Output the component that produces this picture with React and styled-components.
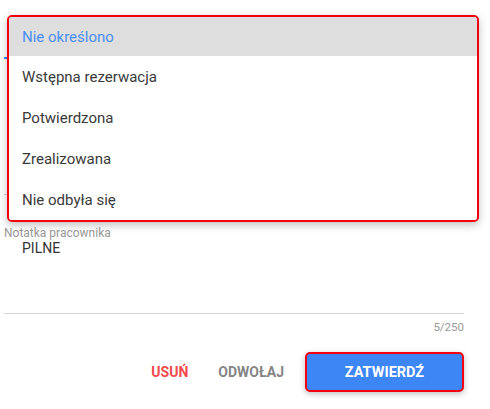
import React from 'react';
import styled, {createGlobalStyle} from 'styled-components';

const options = [
  'Nie określono',
  'Wstępna rezerwacja',
  'Potwierdzona',
  'Zrealizowana',
  'Nie odbyła się'
];

export default function App() {
  return (
    <>
      <GlobalStyle />
      <Page>
        <Form>
          {/* fields covered by the open dropdown */}
          <StatusField />
          <Divider />

          <NoteField>
            <FieldLabel>Notatka pracownika</FieldLabel>
            <NoteText>PILNE</NoteText>
          </NoteField>
          <Counter>5/250</Counter>

          <Actions>
            <TextButton color="#f2494b">USUŃ</TextButton>
            <TextButton color="#858585" last>ODWOŁAJ</TextButton>
            <PrimaryButton>ZATWIERDŹ</PrimaryButton>
          </Actions>
        </Form>

        <Menu>
          {options.map((o, i) => (
            <MenuItem key={o} selected={i === 0}>{o}</MenuItem>
          ))}
        </Menu>
      </Page>
    </>
  );
}

const GlobalStyle = createGlobalStyle`
  body {
    margin: 0;
    background: #fff;
    font-family: Roboto, 'Noto Sans', sans-serif;
  }
`;

const Page = styled.div`
  position: relative;
  width: 490px;
  height: 409px;
  overflow: hidden;
`;

const Form = styled.div`
  display: flex;
  flex-direction: column;
  padding: 0 26px 0 4px;
`;

const StatusField = styled.div`
  height: 57px;
  border-bottom: 2px solid #3d86f5;
`;

const Divider = styled.div`
  height: 1px;
  background: #d5d5d5;
  margin: 135px 0 31px;
`;

const NoteField = styled.div`
  display: flex;
  flex-direction: column;
  height: 87px;
  border-bottom: 1px solid #d4d2dc;
`;

const FieldLabel = styled.div`
  font-size: 12px;
  line-height: 14px;
  color: #9a9a9a;
`;

const NoteText = styled.div`
  font-size: 14px;
  line-height: 18px;
  color: #333;
  padding-left: 18px;
  margin-top: -1px;
`;

const Counter = styled.div`
  align-self: flex-end;
  font-size: 11.5px;
  line-height: 14px;
  color: #999;
  margin-top: 6px;
`;

const Actions = styled.div`
  display: flex;
  justify-content: flex-end;
  align-items: center;
  margin-top: 18px;
`;

const TextButton = styled.div`
  font-size: 14px;
  font-weight: 700;
  color: ${({color}) => color};
  margin-right: ${({last}) => last ? '21px' : '30px'};
  cursor: pointer;
`;

const PrimaryButton = styled.div`
  display: flex;
  align-items: center;
  justify-content: center;
  width: 155px;
  height: 36px;
  background: #3d86f5;
  border: 2px solid #f2000c;
  border-radius: 5px;
  color: #fff;
  font-size: 14.5px;
  font-weight: 700;
  box-shadow: 0 2px 6px rgba(0, 0, 0, 0.25);
  cursor: pointer;
`;

const Menu = styled.div`
  position: absolute;
  top: 15px;
  left: 7px;
  width: 468px;
  background: #fff;
  border: 2px solid #f2000c;
  border-radius: 5px;
  box-shadow: 0 3px 8px rgba(0, 0, 0, 0.25);
  overflow: hidden;
`;

const MenuItem = styled.div`
  height: ${({selected}) => selected ? '39px' : '41px'};
  display: flex;
  align-items: center;
  padding-left: 13px;
  font-size: 15px;
  color: ${({selected}) => selected ? '#4a8ff5' : '#3a3a3a'};
  background: ${({selected}) => selected ? '#dedede' : '#fff'};
`;
